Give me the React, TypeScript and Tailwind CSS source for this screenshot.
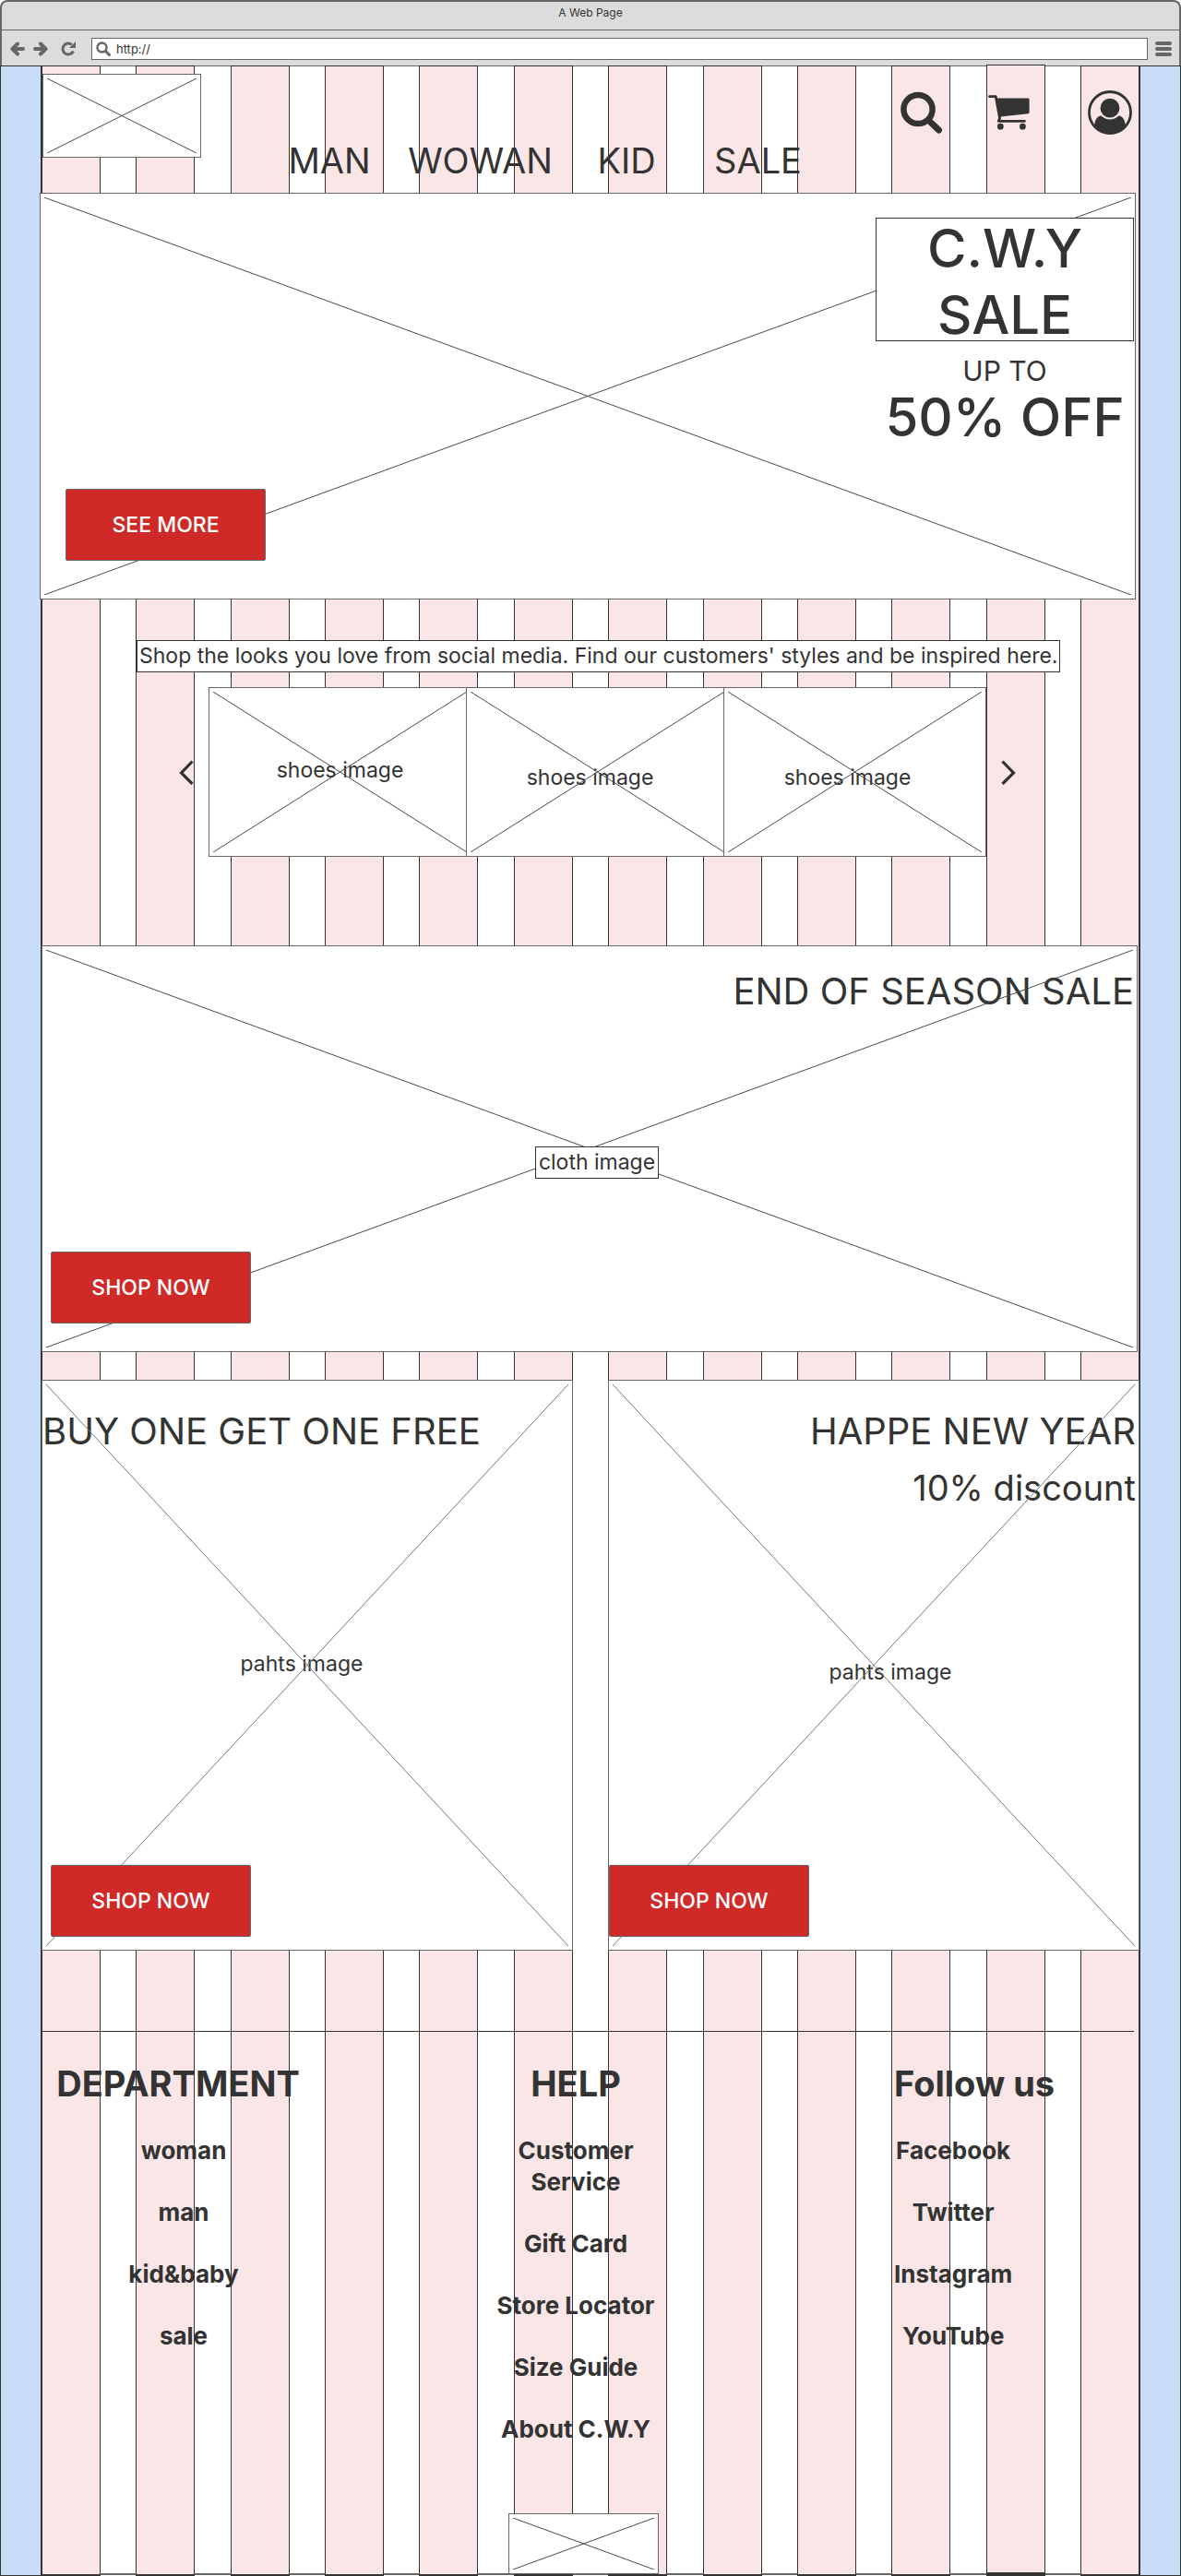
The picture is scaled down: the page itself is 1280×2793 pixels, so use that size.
import type { ReactNode } from 'react';

const stripes = Array.from({ length: 12 }, (_, i) => i);

const navItems = [
  { label: 'MAN', width: 'w-[130px]' },
  { label: 'WOWAN', width: 'w-[197px]' },
  { label: 'KID', width: 'w-[120px]' },
  { label: 'SALE', width: 'w-[165px]' },
];

const shoes = [
  { id: 1, frame: '-mr-[6px]', pad: 'pb-1' },
  { id: 2, frame: '-mr-[6px]', pad: 'pt-3 pr-4' },
  { id: 3, frame: '', pad: 'pt-3 pr-4' },
];

/* Diagonal cross that marks an image placeholder */
function Cross({ color = 'stroke-[#4a4a4a]' }: { color?: string }) {
  return (
    <svg
      className={`pointer-events-none absolute inset-1 h-[calc(100%-8px)] w-[calc(100%-8px)] ${color}`}
      viewBox="0 0 100 100"
      preserveAspectRatio="none"
      aria-hidden="true"
    >
      <path d="M0 0L100 100M100 0L0 100" fill="none" strokeWidth="1" vectorEffect="non-scaling-stroke" />
    </svg>
  );
}

function ActionButton({ children, className = '' }: { children: ReactNode; className?: string }) {
  return (
    <button
      type="button"
      className={`h-[78px] w-[217px] shrink-0 rounded-[2px] border border-[#666] bg-[#cf2a27] text-[23px] font-medium text-white ${className}`}
    >
      {children}
    </button>
  );
}

function BrowserChrome() {
  return (
    <div className="relative rounded-t-lg border-x-2 border-t-2 border-[#666] bg-[#dcdcdc]">
      <div className="h-[31px] border-b border-[#666] pt-1 text-center text-xs leading-4">A Web Page</div>
      <div className="flex h-[39px] items-start border-b border-[#666] pt-2 pr-2 pl-[9px] text-[#666]">
        <button type="button" aria-label="Back" className="mt-1 h-4 w-4">
          <svg viewBox="0 0 16 16" fill="none" stroke="currentColor" strokeWidth="4" strokeLinecap="round" strokeLinejoin="round">
            <path d="M8 2.5L2.5 8L8 13.5M3.5 8H14" />
          </svg>
        </button>
        <button type="button" aria-label="Forward" className="mt-1 ml-[9px] h-4 w-4">
          <svg viewBox="0 0 16 16" fill="none" stroke="currentColor" strokeWidth="4" strokeLinecap="round" strokeLinejoin="round">
            <path d="M8 2.5L13.5 8L8 13.5M12.5 8H2" />
          </svg>
        </button>
        <button type="button" aria-label="Reload" className="mt-1 ml-[14px] h-4 w-4">
          <svg viewBox="0 0 16 16" fill="none" stroke="currentColor" strokeWidth="3">
            <path d="M13.5 10.5A6 6 0 1 1 11.8 3.3" />
            <path d="M16 0V7H9Z" fill="currentColor" stroke="none" />
          </svg>
        </button>
        <div className="ml-[17px] flex h-6 flex-1 items-center border border-[#666] bg-white pl-1">
          <svg className="h-4 w-4 shrink-0" viewBox="0 0 16 16" fill="none" stroke="currentColor" strokeLinecap="round">
            <circle cx="6.5" cy="6.5" r="5" strokeWidth="2.4" />
            <path d="M10.5 10.5L14.4 14.4" strokeWidth="3" />
          </svg>
          <input
            type="text"
            aria-label="Address"
            defaultValue="http://"
            className="ml-1.5 min-w-0 flex-1 bg-transparent text-[13px] leading-5 text-[#333] outline-none"
          />
        </div>
        <button type="button" aria-label="Menu" className="mt-1 ml-2 flex h-4 w-[18px] flex-col justify-between">
          <span className="h-1 w-full rounded-sm bg-[#666]" />
          <span className="h-1 w-full rounded-sm bg-[#666]" />
          <span className="h-1 w-full rounded-sm bg-[#666]" />
        </button>
      </div>
    </div>
  );
}

function Backdrop() {
  return (
    <div className="absolute inset-x-0 -top-px bottom-0 flex" aria-hidden="true">
      <div className="absolute inset-x-0 bottom-px h-[2px] bg-[#666]" />
      <div className="relative w-[45px] border border-[#333] bg-[#c9ddf8]" />
      <div className="relative flex flex-1 justify-between">
        {stripes.map((i) => (
          <div
            key={i}
            className={`w-16 border-x border-t border-[#333] bg-[#fae6e6] ${i === 10 ? '-mt-px border-b-4' : 'border-b-2'}`}
          />
        ))}
      </div>
      <div className="relative w-[45px] border border-[#333] bg-[#c9ddf8]" />
    </div>
  );
}

function SiteHeader() {
  return (
    <header className="flex h-[137px] items-start pt-2 pl-px">
      <a href="#home" aria-label="Home" className="relative h-[91px] w-[172px] border border-[#666] bg-white">
        <Cross />
      </a>
      <nav className="mt-[70px] ml-[74px] flex text-[38px] leading-[48px]">
        {navItems.map((n) => (
          <a key={n.label} href={`#${n.label.toLowerCase()}`} className={`text-center ${n.width}`}>
            {n.label}
          </a>
        ))}
      </nav>
      <div className="mt-[18px] mr-2 ml-auto flex items-center">
        <button type="button" aria-label="Search">
          <svg className="h-[46px] w-[46px]" viewBox="0 0 46 46" fill="none" stroke="#333" strokeLinecap="round">
            <circle cx="19" cy="19.5" r="15.6" strokeWidth="6.5" />
            <path d="M31.5 32.5L41.5 42" strokeWidth="7" />
          </svg>
        </button>
        <button type="button" aria-label="Cart" className="ml-[49px]">
          <svg className="h-[38px] w-[46px]" viewBox="0 0 46 38" fill="#333">
            <path d="M1.5 1.6H8.2L12.6 25.2L11.2 28.3H39.5" fill="none" stroke="#333" strokeWidth="2.8" strokeLinecap="round" strokeLinejoin="round" />
            <path d="M8 3.6H43.2Q44.6 3.6 44.6 5V18.8Q44.6 20.1 43.3 20.3L11.6 23.8Z" />
            <circle cx="13.3" cy="34.2" r="3.4" />
            <circle cx="37.4" cy="34.2" r="3.4" />
          </svg>
        </button>
        <button type="button" aria-label="Account" className="ml-[62px]">
          <svg className="h-12 w-12" viewBox="0 0 48 48" fill="#333">
            <circle cx="24" cy="24" r="22.5" fill="none" stroke="#333" strokeWidth="2.8" />
            <ellipse cx="24" cy="19.2" rx="10.4" ry="10.4" />
            <path d="M7.2 38.5C7.6 32 10 28 14.5 27.6C17.4 30.2 20.4 31.6 24 31.6C27.6 31.6 30.6 30.2 33.5 27.6C38 28 40.4 32 40.8 38.5C37 44 31 47 24 47C17 47 11 44 7.2 38.5Z" />
          </svg>
        </button>
      </div>
    </header>
  );
}

function Hero() {
  return (
    <section className="relative mr-1 -ml-[2px] flex h-[441px] justify-between border border-[#666] bg-white">
      <Cross />
      <ActionButton className="relative mb-[41px] ml-[27px] self-end">SEE MORE</ActionButton>
      <div className="relative mr-px w-[280px] pt-[26px] text-center">
        <h1 className="flex h-[134px] items-center justify-center border border-[#333] bg-white pt-1 text-[58px] leading-[72px] font-medium">
          <span>
            C.W.Y
            <br />
            SALE
          </span>
        </h1>
        <p className="mt-3 text-[30px] leading-10">UP TO</p>
        <p className="text-[58px] leading-[60px] font-medium whitespace-nowrap">50% OFF</p>
      </div>
    </section>
  );
}

function Carousel() {
  return (
    <section className="mt-4 mr-[134px] ml-[149px] flex h-[184px] items-center gap-4">
      <button type="button" aria-label="Previous" className="shrink-0">
        <svg className="h-7 w-4" viewBox="0 0 16 28" fill="none" stroke="#333" strokeWidth="3.2">
          <path d="M14.5 2.5L2.5 15L14.5 27" />
        </svg>
      </button>
      <div className="flex flex-1 self-stretch">
        {shoes.map((s) => (
          <figure
            key={s.id}
            className={`relative flex flex-1 items-center justify-center border border-[#666] bg-white ${s.frame}`}
          >
            <figcaption className={`text-[23px] leading-8 ${s.pad}`}>shoes image</figcaption>
            <Cross />
          </figure>
        ))}
      </div>
      <button type="button" aria-label="Next" className="shrink-0">
        <svg className="h-7 w-4" viewBox="0 0 16 28" fill="none" stroke="#333" strokeWidth="3.2">
          <path d="M1.5 2.5L13.5 15L1.5 27" />
        </svg>
      </button>
    </section>
  );
}

function FooterLinks({ items, className }: { items: string[]; className: string }) {
  return (
    <ul className={`mt-8 flex flex-col gap-[33px] text-center text-[26px] leading-[34px] font-bold ${className}`}>
      {items.map((t) => (
        <li key={t}>
          <a href={`#${t.toLowerCase().replace(/\W+/g, '-')}`}>{t}</a>
        </li>
      ))}
    </ul>
  );
}

export default function App() {
  return (
    <div className="bg-white font-['Inter',sans-serif] text-[#333]">
      <BrowserChrome />
      <div className="relative">
        <Backdrop />
        <main className="relative mx-[45px] flex flex-col pb-[2px]">
          <SiteHeader />
          <Hero />

          <p className="mt-11 ml-[103px] w-fit border border-[#333] bg-white px-0.5 text-[23px] leading-[33px] whitespace-nowrap">
            Shop the looks you love from social media. Find our customers' styles and be inspired here.
          </p>
          <Carousel />

          <section className="relative mt-24 mr-[2px] flex h-[441px] flex-col border border-[#666] bg-white pt-6">
            <h2 className="pr-[3px] text-right text-[40px] leading-[50px]">END OF SEASON SALE</h2>
            <Cross />
            <p className="relative mt-[143px] ml-4 self-center border border-[#333] bg-white px-[3px] text-[23px] leading-[33px]">
              cloth image
            </p>
            <ActionButton className="relative mt-[79px] ml-[9px]">SHOP NOW</ActionButton>
          </section>

          <div className="mt-[30px] flex gap-[38px]">
            <section className="relative flex h-[619px] flex-1 flex-col border border-[#666] bg-white pt-[30px]">
              <h2 className="text-[40px] leading-[50px] whitespace-nowrap">BUY ONE GET ONE FREE</h2>
              <p className="mt-[211px] pr-3 text-center text-[23px] leading-8">pahts image</p>
              <Cross color="stroke-[#777]" />
              <ActionButton className="relative mt-auto mb-[14px] ml-[9px]">SHOP NOW</ActionButton>
            </section>
            <section className="relative flex h-[619px] flex-1 flex-col border border-[#666] bg-white pt-[30px]">
              <h2 className="pr-[3px] text-right text-[40px] leading-[50px]">HAPPE NEW YEAR</h2>
              <p className="mt-3 pr-[3px] text-right text-[38px] leading-[48px]">10% discount</p>
              <p className="mt-40 pl-9 text-center text-[23px] leading-8">pahts image</p>
              <Cross color="stroke-[#777]" />
              <ActionButton className="relative mt-auto mb-[14px]">SHOP NOW</ActionButton>
            </section>
          </div>

          <hr className="mt-[87px] mr-[6px] border-[#333]" />

          <footer className="flex flex-col">
            <div className="mt-8 grid grid-cols-[300fr_558fr_332fr]">
              <div className="text-center">
                <h3 className="pr-1 text-[38px] leading-[48px] font-bold">DEPARTMENT</h3>
                <FooterLinks items={['woman', 'man', 'kid&baby', 'sale']} className="pl-2" />
              </div>
              <div className="text-center">
                <h3 className="text-[38px] leading-[48px] font-bold">HELP</h3>
                <FooterLinks
                  items={['Customer Service', 'Gift Card', 'Store Locator', 'Size Guide', 'About C.W.Y']}
                  className="mx-auto w-[190px]"
                />
              </div>
              <div className="pl-[66px]">
                <h3 className="text-[38px] leading-[48px] font-bold">Follow us</h3>
                <FooterLinks items={['Facebook', 'Twitter', 'Instagram', 'YouTube']} className="w-fit" />
              </div>
            </div>
            <a
              href="#home"
              aria-label="Home"
              className="relative mt-[74px] mr-4 h-[66px] w-[163px] self-center border border-[#666] bg-white"
            >
              <Cross />
            </a>
          </footer>
        </main>
      </div>
    </div>
  );
}
